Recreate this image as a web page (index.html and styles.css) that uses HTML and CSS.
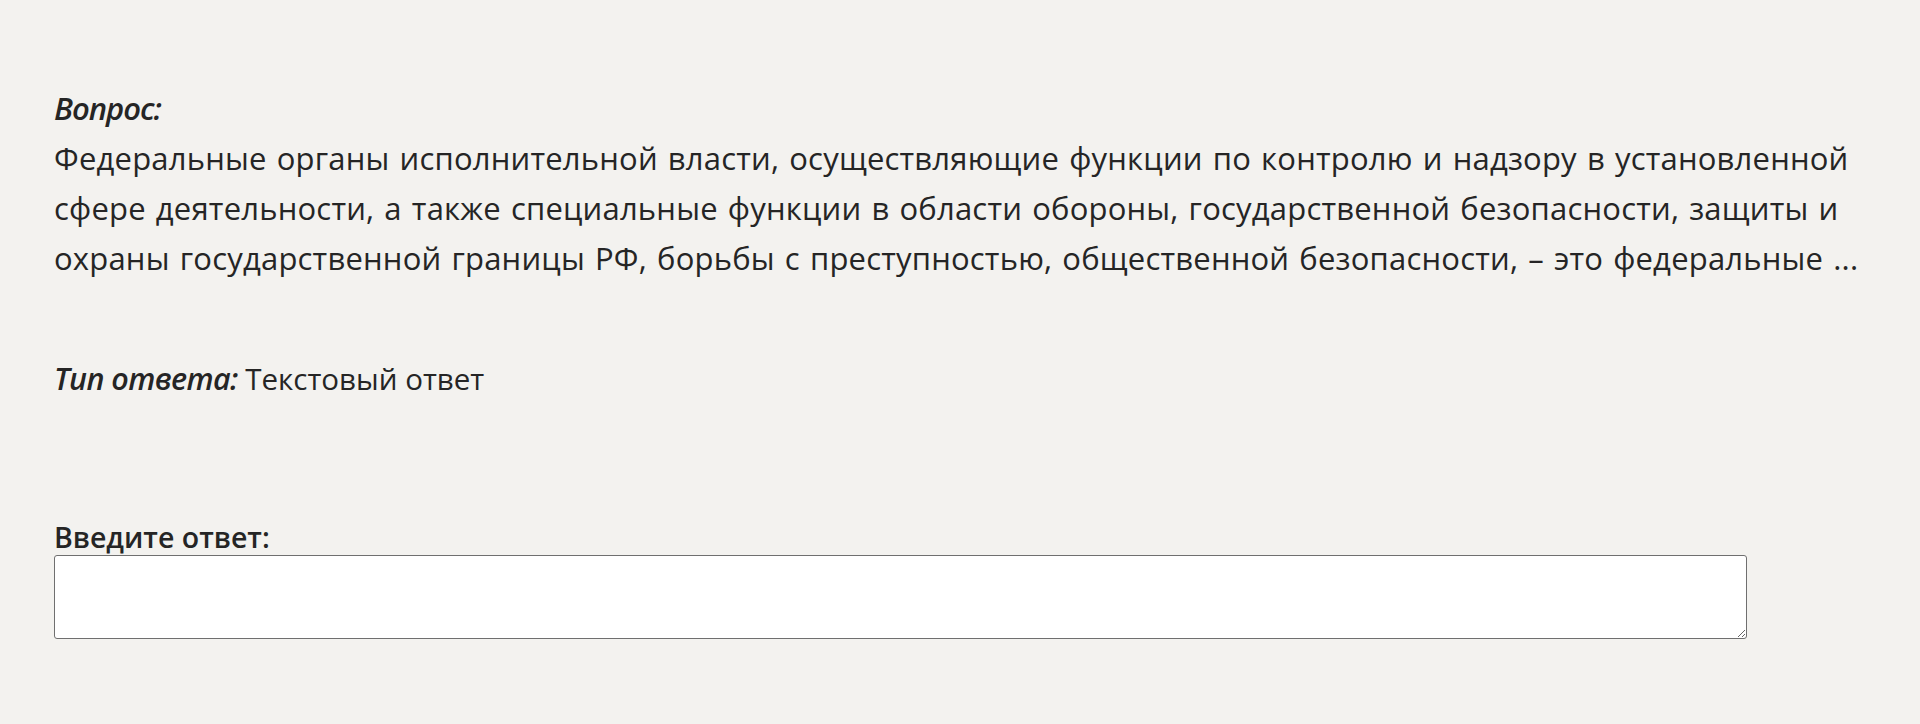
FILE: index.html
```html
<!DOCTYPE html>
<html lang="ru">

<head>
    <meta charset="UTF-8" />
    <meta name="viewport" content="width=device-width, initial-scale=1" />
    <title>Вопрос</title>
    <link rel="stylesheet" href="styles.css">
</head>

<body>
    <main class="quiz">
        <!-- Question -->
        <section class="question">
            <p class="question-label">Вопрос:</p>
            <p class="question-text">Федеральные органы исполнительной власти, осуществляющие функции по контролю и надзору в установленной сфере деятельности, а также специальные функции в области обороны, государственной безопасности, защиты и охраны государственной границы РФ, борьбы с преступностью, общественной безопасности, – это федеральные ...</p>
        </section>

        <p class="answer-type"><em>Тип ответа:</em> Текстовый ответ</p>

        <!-- Answer form -->
        <form class="answer">
            <label for="answer-input" class="answer-label">Введите ответ:</label>
            <textarea id="answer-input" class="answer-input"></textarea>
        </form>
    </main>
</body>

</html>
```

FILE: styles.css
```css
* {
    margin: 0;
    padding: 0;
    box-sizing: border-box;
}

body {
    background: #f3f2ef;
    color: #252525;
    font-family: 'Open Sans', 'Noto Sans', sans-serif;
    font-size: 31px;
}

.quiz {
    padding: 83px 30px 40px 54px;
}

/* Question block */
.question-label {
    font-style: italic;
    font-weight: 600;
    line-height: 50px;
    letter-spacing: -1px;
}

.question-text {
    line-height: 50px;
    letter-spacing: 0.2px;
    word-spacing: 1.8px;
}

/* Answer type */
.answer-type {
    margin-top: 70px;
    font-size: 29.5px;
    line-height: 50px;
}

.answer-type em {
    font-size: 30.5px;
    font-weight: 600;
    letter-spacing: -0.6px;
}

/* Answer form */
.answer {
    display: flex;
    flex-direction: column;
    margin-top: 116px;
}

.answer-label {
    font-weight: 600;
    font-size: 28.5px;
    line-height: 34px;
}

.answer-input {
    width: 1693px;
    height: 84px;
    margin-top: 1px;
    background: #fff;
    border: 1px solid #6f6f6f;
    border-radius: 3px;
    font: inherit;
    resize: vertical;
}
```
